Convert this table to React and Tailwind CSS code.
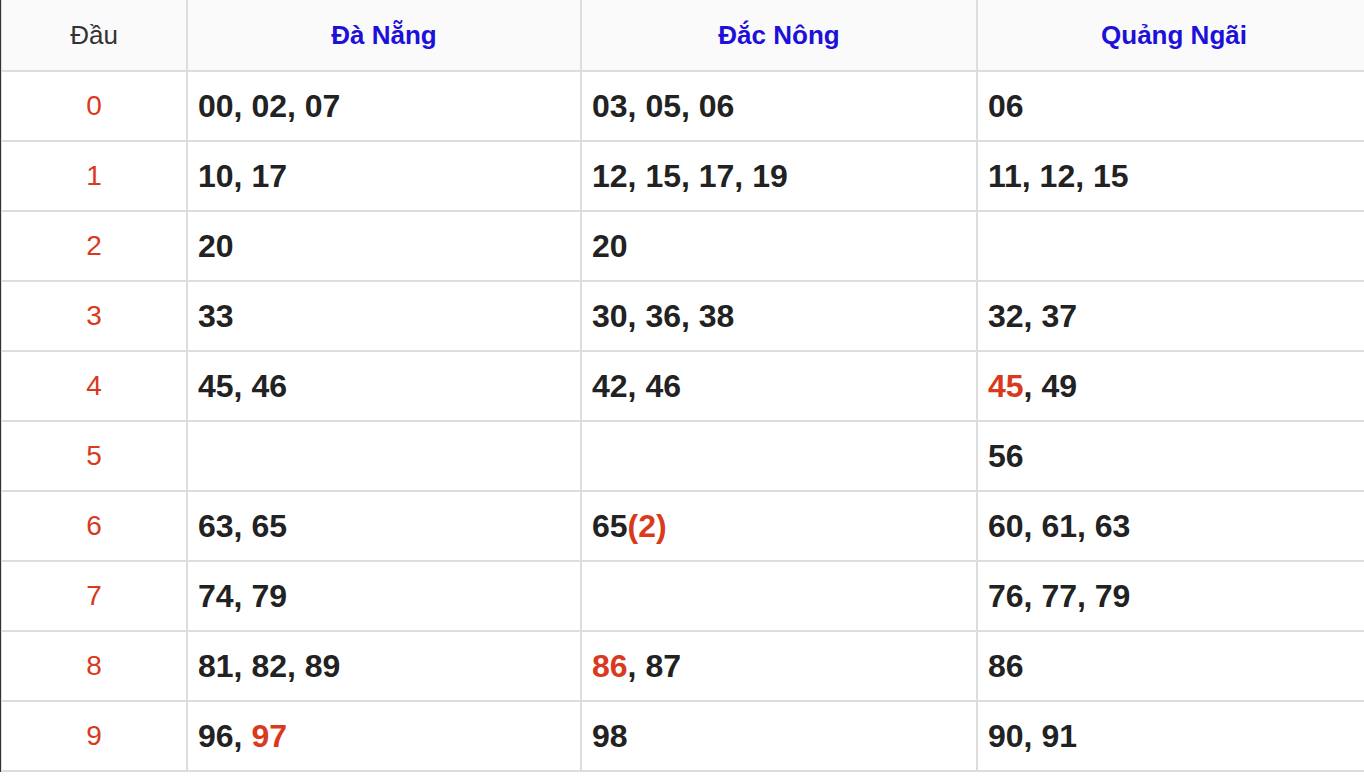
import React from "react";

const R = ({ children }) => <span className="text-[#d9391d]">{children}</span>;

const rows = [
  ["0", "00, 02, 07", "03, 05, 06", "06"],
  ["1", "10, 17", "12, 15, 17, 19", "11, 12, 15"],
  ["2", "20", "20", ""],
  ["3", "33", "30, 36, 38", "32, 37"],
  ["4", "45, 46", "42, 46", <><R>45</R>, 49</>],
  ["5", "", "", "56"],
  ["6", "63, 65", <>65<R>(2)</R></>, "60, 61, 63"],
  ["7", "74, 79", "", "76, 77, 79"],
  ["8", "81, 82, 89", <><R>86</R>, 87</>, "86"],
  ["9", <>96, <R>97</R></>, "98", "90, 91"],
];

export default function App() {
  return (
    <div
      className="w-[1364px] h-[777px] bg-white overflow-hidden"
      style={{ fontFamily: '"Liberation Sans", Arial, sans-serif' }}
    >
      <div className="grid grid-cols-[187px_394px_396px_394px] w-[1371px] border-l border-[#333]">
        <div className="h-[72px] bg-[#fafafa] border-l border-r-2 border-b-2 border-[#ddd] flex items-center justify-center text-[26px] text-[#333]">
          Đầu
        </div>
        {["Đà Nẵng", "Đắc Nông", "Quảng Ngãi"].map((h, i) => (
          <div
            key={h}
            className="h-[72px] bg-[#fafafa] border-b-2 border-r-2 border-[#ddd] flex items-center justify-center text-[26px] font-bold text-[#1d10d9]"
          >
            {h}
          </div>
        ))}
        {rows.map((r) => (
          <React.Fragment key={r[0]}>
            <div className="h-[70px] border-l border-r-2 border-b-2 border-[#ddd] flex items-center justify-center text-[28px] text-[#d9391d]">
              {r[0]}
            </div>
            {[1, 2, 3].map((c) => (
              <div
                key={c}
                className="h-[70px] border-b-2 border-r-2 border-[#ddd] flex items-center pl-[10px] text-[32px] font-bold text-[#222]"
              >
                <span>{r[c]}</span>
              </div>
            ))}
          </React.Fragment>
        ))}
      </div>
    </div>
  );
}
